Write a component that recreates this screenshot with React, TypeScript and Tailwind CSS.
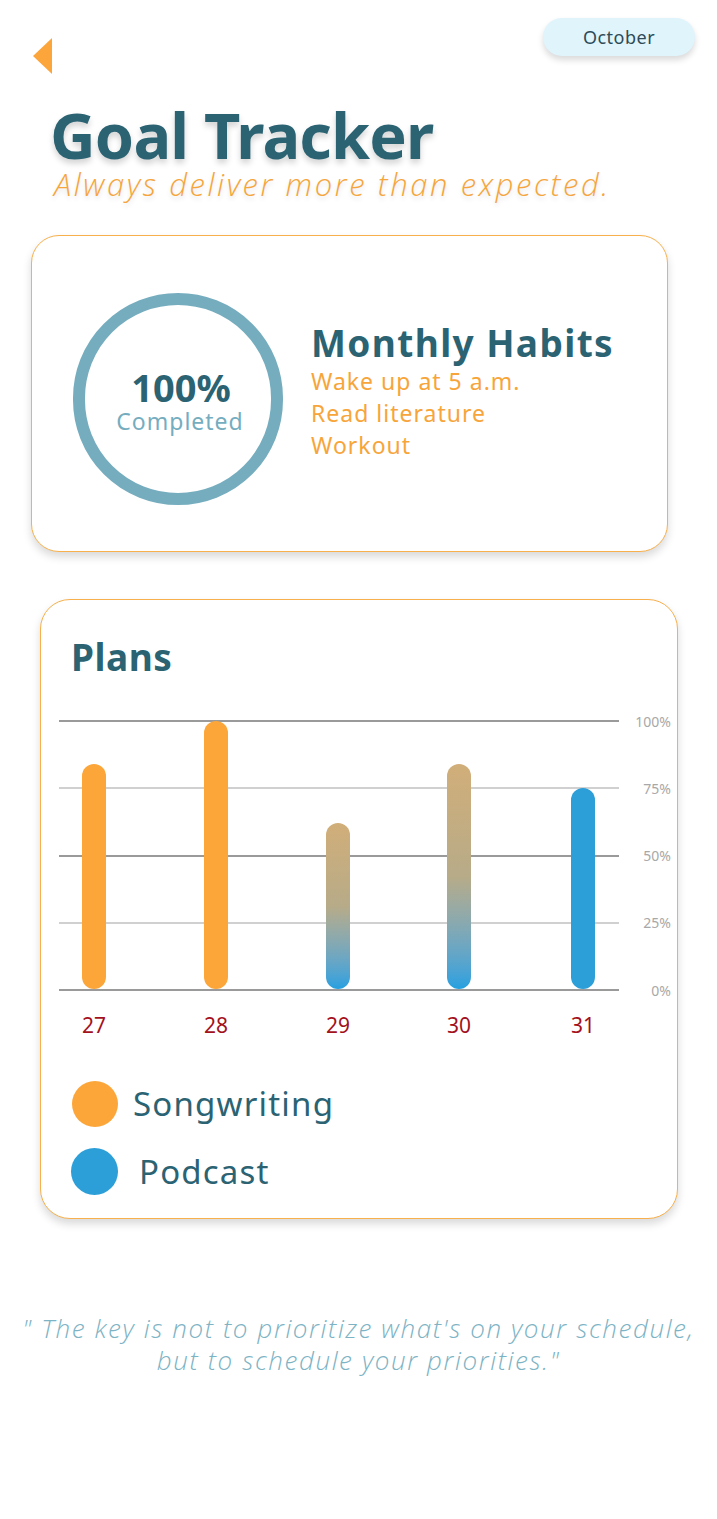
const days = [
  { day: '27', value: 84, kind: 'song' },
  { day: '28', value: 100, kind: 'song' },
  { day: '29', value: 62, kind: 'mix' },
  { day: '30', value: 84, kind: 'mix' },
  { day: '31', value: 75, kind: 'pod' },
]

const grid = [
  { label: '100%', dark: true },
  { label: '75%', dark: false },
  { label: '50%', dark: true },
  { label: '25%', dark: false },
  { label: '0%', dark: true },
]

const offsets = ['ml-[23px]', 'ml-[98px]', 'ml-[98px]', 'ml-[97px]', 'ml-[100px]']

function barClass(kind: string) {
  if (kind === 'song') return 'bg-[#fca63a]'
  if (kind === 'pod') return 'bg-[#2c9ed8]'
  return 'bg-gradient-to-b from-[#d1ae79] via-[#b7ab88] to-[#22a0e0]'
}

export default function App() {
  return (
    <div className="w-[717px] min-h-[1519px] bg-white font-['Noto_Sans',sans-serif]">
      {/* Top bar */}
      <div className="flex items-start justify-between">
        <div className="ml-[33px] mt-[38px] w-0 h-0 border-y-[18px] border-y-transparent border-r-[19px] border-r-[#fba53a]" />
        <div className="mr-[22px] mt-[18px] w-[152px] h-[38px] rounded-full bg-[#e0f4fc] shadow-[0_4px_6px_rgba(0,0,0,0.15)] flex items-center justify-center text-[18px] text-[#2e4b57] tracking-[0.5px]">
          October
        </div>
      </div>

      {/* Title */}
      <div className="pl-[50px] mt-[31px]">
        <h1 className="text-[63px] leading-[60px] font-bold text-[#2b6373] tracking-[-0.8px] [text-shadow:0_4px_6px_rgba(0,0,0,0.18)]">
          Goal Tracker
        </h1>
        <p className="mt-[1px] ml-[4px] text-[31px] leading-[36px] italic font-light text-[#f6a53c] tracking-[2.6px] font-['Open_Sans',sans-serif] [text-shadow:0_3px_5px_rgba(0,0,0,0.12)]">
          Always deliver more than expected.
        </p>
      </div>

      {/* Monthly habits card */}
      <div className="ml-[31px] mt-[33px] w-[637px] h-[317px] rounded-[28px] border-[1.5px] border-[#f7b04c] bg-white shadow-[0_5px_8px_rgba(0,0,0,0.15)] flex items-center">
        <div className="ml-[41px] mt-[11px] w-[210px] h-[212px] rounded-full border-[12px] border-[#75adbf] flex flex-col items-center justify-center pt-[4px]">
          <div className="text-[38px] leading-[40px] font-bold text-[#2b6373] ml-[6px]">100%</div>
          <div className="text-[23px] leading-[28px] text-[#75adbf] ml-[4px] tracking-[1px]">Completed</div>
        </div>
        <div className="ml-[28px] -mt-[6px]">
          <div className="text-[37px] leading-[44px] font-bold text-[#2b6373] tracking-[1.4px]">Monthly Habits</div>
          <ul className="text-[23px] leading-[32px] text-[#f7a53a] tracking-[1px]">
            <li>Wake up at 5 a.m.</li>
            <li>Read literature</li>
            <li>Workout</li>
          </ul>
        </div>
      </div>

      {/* Plans card */}
      <div className="ml-[40px] mt-[47px] w-[638px] h-[620px] rounded-[30px] border-[1.5px] border-[#f7b04c] bg-white shadow-[0_5px_8px_rgba(0,0,0,0.15)] pt-[35px]">
        <div className="ml-[30px] text-[37px] leading-[44px] font-bold text-[#2b6373] tracking-[0.5px]">Plans</div>

        {/* Chart */}
        <div className="relative mt-[42px] ml-[18px] h-[269px]">
          <div className="flex flex-col justify-between h-full">
            {grid.map((g) => (
              <div key={g.label} className="flex items-center h-0">
                <div className={`w-[560px] h-[2px] ${g.dark ? 'bg-[#9a9a9a]' : 'bg-[#d0d0d0]'}`} />
                <span className="w-[52px] text-right text-[14px] text-[#a8a8a8]">{g.label}</span>
              </div>
            ))}
          </div>
          <div className="absolute left-0 top-0 w-[560px] h-[268px] flex items-end">
            {days.map((d, i) => (
              <div key={d.day} className={`w-[24px] rounded-full ${barClass(d.kind)} ${offsets[i]}`} style={{ height: `${d.value}%` }} />
            ))}
          </div>
        </div>

        {/* Day labels */}
        <div className="mt-[21px] ml-[18px] w-[560px] flex">
          {days.map((d, i) => (
            <div key={d.day} className={`w-[24px] flex justify-center text-[21px] leading-[28px] text-[#a3111c] ${offsets[i]}`}>
              {d.day}
            </div>
          ))}
        </div>

        {/* Legend */}
        <div className="mt-[42px] ml-[31px] flex flex-col gap-[21px]">
          <div className="flex items-center">
            <div className="w-[46px] h-[46px] rounded-full bg-[#fca63a]" />
            <span className="ml-[15px] text-[33px] leading-[46px] text-[#2b6373] tracking-[1.2px]">Songwriting</span>
          </div>
          <div className="flex items-center">
            <div className="w-[47px] h-[47px] rounded-full bg-[#2c9ed8] -ml-[1px]" />
            <span className="ml-[21px] text-[33px] leading-[46px] text-[#2b6373] tracking-[1.2px]">Podcast</span>
          </div>
        </div>
      </div>

      {/* Quote */}
      <div className="mt-[93px] text-center text-[26px] leading-[32px] italic font-light text-[#7db3c4] tracking-[1.6px] font-['Open_Sans',sans-serif]">
        <p>" The key is not to prioritize what's on your schedule,</p>
        <p>but to schedule your priorities."</p>
      </div>
    </div>
  )
}
